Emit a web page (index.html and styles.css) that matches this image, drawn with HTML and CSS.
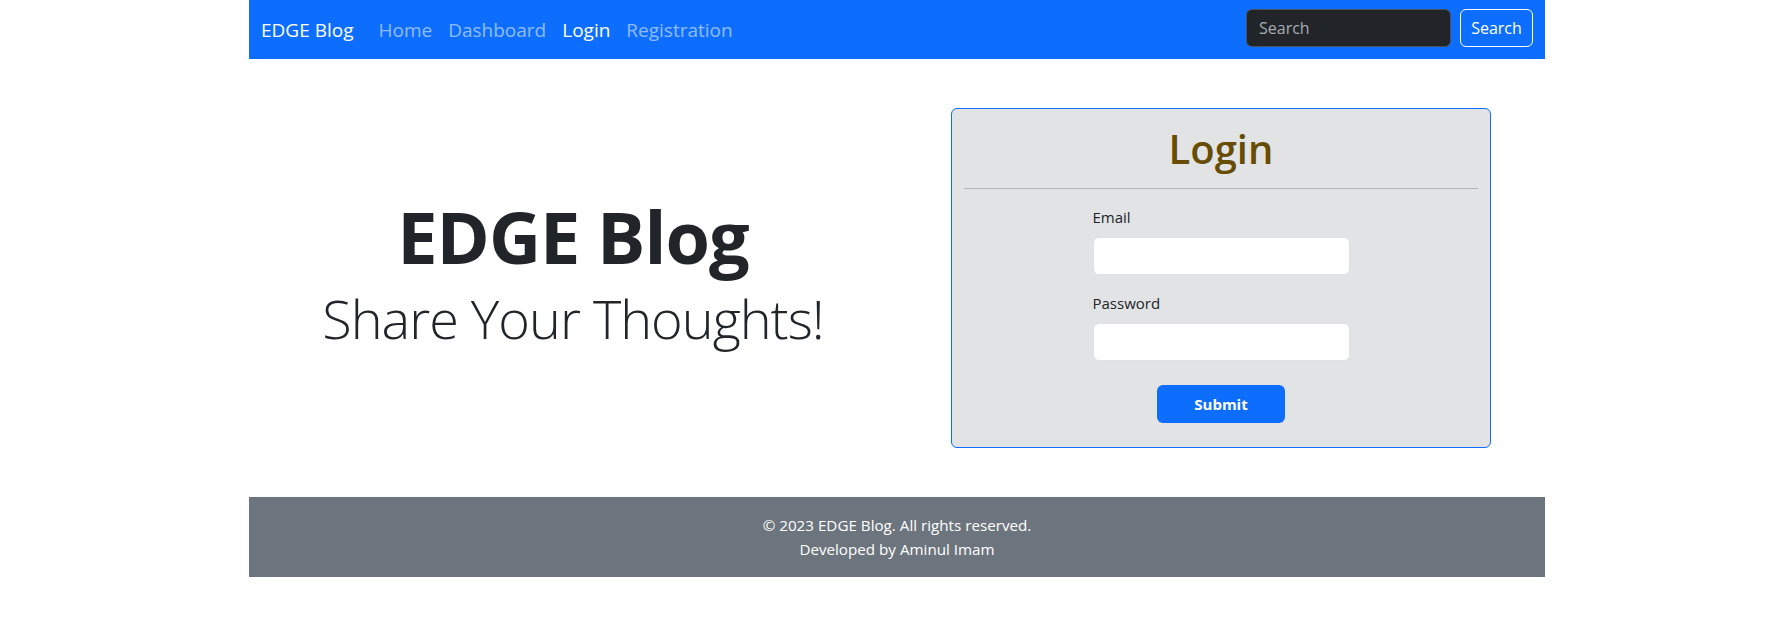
FILE: index.html
```html
<!DOCTYPE html>
<html lang="en">
<head>
<meta charset="utf-8">
<title>EDGE Blog - Login</title>
<link rel="stylesheet" href="styles.css">
</head>
<body>
<div class="page">
  <nav class="navbar">
    <a class="brand" href="#">EDGE Blog</a>
    <ul class="nav-links">
      <li><a class="nav-link" href="#">Home</a></li>
      <li><a class="nav-link" href="#">Dashboard</a></li>
      <li><a class="nav-link active" href="#">Login</a></li>
      <li><a class="nav-link" href="#">Registration</a></li>
    </ul>
    <form class="search-form">
      <input class="search-input" type="search" placeholder="Search">
      <button class="search-btn" type="button">Search</button>
    </form>
  </nav>

  <main class="main">
    <section class="hero">
      <h1 class="hero-title">EDGE Blog</h1>
      <p class="hero-sub">Share Your Thoughts!</p>
    </section>
    <section class="login-col">
      <div class="login-card">
        <h2 class="login-title">Login</h2>
        <hr class="divider">
        <form class="login-form">
          <div class="field">
            <label class="field-label" for="email">Email</label>
            <input class="field-input" id="email" type="email">
          </div>
          <div class="field">
            <label class="field-label" for="password">Password</label>
            <input class="field-input" id="password" type="password">
          </div>
          <div class="actions">
            <button class="submit-btn" type="button">Submit</button>
          </div>
        </form>
      </div>
    </section>
  </main>

  <footer class="footer">
    <p>&copy; 2023 EDGE Blog. All rights reserved.</p>
    <p>Developed by Aminul Imam</p>
  </footer>
</div>
</body>
</html>
```

FILE: styles.css
```css
* { box-sizing: border-box; }

body {
  margin: 0;
  font-family: "Open Sans", "Noto Sans", sans-serif;
  font-size: 16px;
  line-height: 1.5;
  color: #212529;
  background: #fff;
}

.page {
  width: 1296px;
  margin-left: 249px;
}

/* Navbar */
.navbar {
  height: 59px;
  background: #0d6efd;
  display: flex;
  align-items: center;
  padding: 0 12px;
}

.brand {
  font-size: 19px;
  line-height: 30px;
  color: #fff;
  text-decoration: none;
  margin-right: 17px;
}

.nav-links {
  display: flex;
  list-style: none;
  margin: 0;
  padding: 0;
  flex: 1;
}

.nav-link {
  display: block;
  padding: 8px 8px;
  font-size: 19px;
  line-height: 30px;
  color: rgba(255, 255, 255, 0.55);
  text-decoration: none;
}

.nav-link.active {
  color: #fff;
}

.search-form {
  display: flex;
  gap: 9px;
  margin-top: -3px;
}

.search-input {
  width: 205px;
  height: 38px;
  padding: 6px 12px;
  font-family: inherit;
  font-size: 16px;
  color: #dee2e6;
  background: #212529;
  border: 1px solid #495057;
  border-radius: 6px;
  outline: none;
}

.search-input::placeholder {
  color: #a7acb1;
}

.search-btn {
  height: 38px;
  width: 73px;
  padding: 0;
  font-family: inherit;
  font-size: 16px;
  color: #fff;
  background: transparent;
  border: 1px solid #fff;
  border-radius: 6px;
}

/* Main */
.main {
  display: flex;
  padding: 49px 0;
}

.hero {
  flex: 1;
  display: flex;
  flex-direction: column;
  justify-content: center;
  align-items: center;
  padding-bottom: 12px;
}

.hero-title {
  margin: 0 0 6px;
  font-size: 72px;
  line-height: 86px;
  font-weight: 700;
  letter-spacing: -1px;
}

.hero-sub {
  margin: 0;
  font-size: 54px;
  line-height: 67px;
  font-weight: 300;
  letter-spacing: -1px;
}

.login-col {
  flex: 1;
  display: flex;
  justify-content: center;
}

.login-card {
  width: 540px;
  background: #e2e3e5;
  border: 1px solid #0d6efd;
  border-radius: 6px;
  padding: 12px;
}

.login-title {
  margin: 4px 0 15px;
  text-align: center;
  font-size: 40px;
  line-height: 48px;
  font-weight: 600;
  color: #664d03;
}

.divider {
  margin: 0;
  border: 0;
  border-top: 1px solid #b3b4b6;
}

.login-form {
  width: 50%;
  margin: 16px auto 0;
}

.field {
  margin-bottom: 16px;
}

.field-label {
  display: block;
  margin-bottom: 8px;
  font-size: 15px;
  line-height: 24px;
}

.field-input {
  display: block;
  width: 100%;
  height: 38px;
  background: #fff;
  border: 1px solid #dee2e6;
  border-radius: 6px;
  font-family: inherit;
  font-size: 16px;
  padding: 6px 12px;
}

.actions {
  display: flex;
  justify-content: center;
  padding-top: 8px;
  padding-bottom: 12px;
}

.submit-btn {
  width: 128px;
  height: 38px;
  font-family: inherit;
  font-size: 15px;
  font-weight: 700;
  color: #fff;
  background: #0d6efd;
  border: 0;
  border-radius: 6px;
}

/* Footer */
.footer {
  background: #6c757d;
  color: #fff;
  text-align: center;
  padding: 16px;
  font-size: 15.2px;
}

.footer p {
  margin: 0;
  line-height: 24px;
}
```
